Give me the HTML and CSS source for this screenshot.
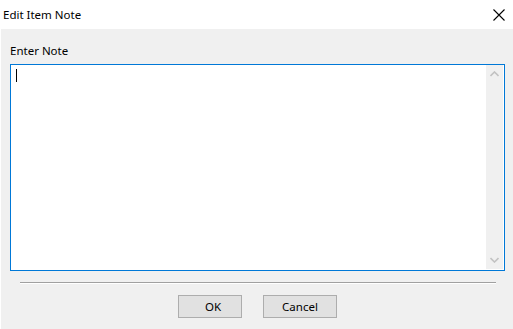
FILE: index.html
```html
<!DOCTYPE html>
<html>
<head>
<meta charset="utf-8">
<link rel="stylesheet" href="styles.css">
</head>
<body>
<div class="window">
  <div class="titlebar">
    <span class="title">Edit Item Note</span>
    <svg class="close" width="12" height="12" viewBox="0 0 12 12"><path d="M0.5 0.5 L11.5 11.5 M11.5 0.5 L0.5 11.5" stroke="#000" stroke-width="1.1" fill="none"/></svg>
  </div>
  <div class="panel">
    <div class="label">Enter Note</div>
    <div class="textbox">
      <div class="editor"><span class="caret"></span></div>
      <div class="scrollbar">
        <svg width="9" height="6" viewBox="0 0 9 6"><path d="M0.5 5 L4.5 1 L8.5 5" stroke="#c2c2c2" stroke-width="1.6" fill="none"/></svg>
        <svg width="9" height="6" viewBox="0 0 9 6"><path d="M0.5 1 L4.5 5 L8.5 1" stroke="#c2c2c2" stroke-width="1.6" fill="none"/></svg>
      </div>
    </div>
    <div class="sep"></div>
    <div class="buttons">
      <button class="btn btn-ok">OK</button>
      <button class="btn btn-cancel">Cancel</button>
    </div>
  </div>
</div>
</body>
</html>
```
FILE: styles.css
```css
html, body {
  margin: 0;
  padding: 0;
  background: #ffffff;
}
.window {
  width: 513px;
  height: 329px;
  display: flex;
  flex-direction: column;
  font-family: "Noto Sans", "Liberation Sans", sans-serif;
  font-size: 11.5px;
  color: #000;
}
.titlebar {
  height: 29px;
  display: flex;
  align-items: center;
  justify-content: space-between;
  padding: 0 8px 0 3px;
  box-sizing: border-box;
}
.title {
  line-height: 16px;
  margin-top: 1px;
}
.close {
  display: block;
  margin-top: 1px;
}
.panel {
  flex: 1;
  margin-left: 1px;
  background: #f0f0f0;
  display: flex;
  flex-direction: column;
}
.label {
  margin: 14px 0 0 9px;
  line-height: 16px;
  height: 16px;
}
.textbox {
  margin: 5px 0 0 9px;
  width: 495px;
  height: 207px;
  box-sizing: border-box;
  border: 1px solid #0078d7;
  background: #fff;
  padding: 0 1px 1px 0;
  display: flex;
}
.editor {
  flex: 1;
  position: relative;
}
.caret {
  position: absolute;
  left: 5px;
  top: 4px;
  width: 1px;
  height: 13px;
  background: #000;
}
.scrollbar {
  width: 17px;
  background: #f0f0f0;
  display: flex;
  flex-direction: column;
  justify-content: space-between;
  align-items: center;
  padding: 6px 0 6px;
}
.scrollbar svg {
  display: block;
}
.sep {
  margin: 11px 0 0 19px;
  width: 476px;
  height: 1px;
  background: #a0a0a0;
  border-bottom: 1px solid #ffffff;
}
.buttons {
  margin-top: 11px;
  display: flex;
  justify-content: flex-start;
  padding-left: 177px;
  gap: 21px;
}
.btn {
  height: 23px;
  box-sizing: border-box;
  background: #e1e1e1;
  border: 1px solid #adadad;
  border-radius: 0;
  font-family: "Noto Sans", "Liberation Sans", sans-serif;
  font-size: 11.5px;
  color: #000;
  padding: 0;
  line-height: 19px;
}
.btn-ok {
  width: 64px;
  padding-left: 6px;
}
.btn-cancel {
  width: 74px;
}
```
